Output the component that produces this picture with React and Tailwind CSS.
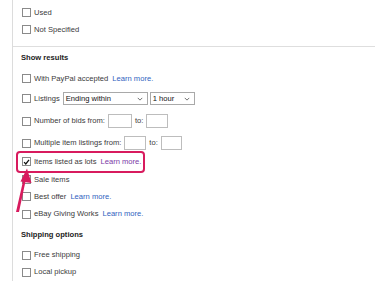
import React from 'react';

const font = { fontFamily: '"Liberation Sans", Arial, sans-serif' };

function Box({ checked }) {
  return (
    <span className="relative w-[9px] h-[9px] border border-[#8a8a8a] bg-white shrink-0 mr-[3px] flex items-center justify-center">
      {checked && (
        <svg viewBox="0 0 10 10" className="w-[8px] h-[8px]">
          <path d="M1.5 5.2 L4 7.8 L8.6 1.8" fill="none" stroke="#111" strokeWidth="1.8" />
        </svg>
      )}
    </span>
  );
}

function Learn({ visited }) {
  return (
    <span className={`ml-[4px] ${visited ? 'text-[#7a3aa6]' : 'text-[#2f62c0]'}`}>Learn more.</span>
  );
}

function Row({ h, children, checked }) {
  return (
    <div className={`flex items-center pl-[9px] ${h}`}>
      <Box checked={checked} />
      {children}
    </div>
  );
}

function Select({ w, label }) {
  return (
    <span className={`${w} h-[13px] border border-[#a9a9a9] bg-white flex items-center justify-between px-[2px] text-[#111]`}>
      <span>{label}</span>
      <svg viewBox="0 0 8 5" className="w-[6px] h-[4px] mr-[2px]">
        <path d="M1 1 L4 4 L7 1" fill="none" stroke="#444" strokeWidth="1" />
      </svg>
    </span>
  );
}

function Field({ w }) {
  return <span className={`${w} h-[14px] border border-[#bdbdbd] bg-white inline-block`} />;
}

export default function App() {
  return (
    <div className="w-[375px] h-[281px] bg-white overflow-hidden text-[7.6px] text-[#3a3a3a]" style={font}>
      <div className="relative ml-[12px] h-full border-l border-[#dcdcdc]">
        <div className="pt-[4px]">
          <Row h="h-[17px]">Used</Row>
          <Row h="h-[17px]">Not Specified</Row>
        </div>
        <div className="mt-[8px] border-t border-[#dedede]">
          <div className="h-[22px] flex items-center pl-[8px] font-bold text-[#222]">Show results</div>
          <Row h="h-[19px]">
            With PayPal accepted <Learn />
          </Row>
          <Row h="h-[21px]">
            Listings
            <span className="ml-[3px]">
              <Select w="w-[85px]" label="Ending within" />
            </span>
            <span className="ml-[2px]">
              <Select w="w-[45px]" label="1 hour" />
            </span>
          </Row>
          <Row h="h-[24px]">
            Number of bids from:
            <span className="ml-[3px] flex items-center">
              <Field w="w-[24px]" />
              <span className="mx-[3px]">to:</span>
              <Field w="w-[22px]" />
            </span>
          </Row>
          <Row h="h-[20px]">
            Multiple item listings from:
            <span className="ml-[3px] flex items-center">
              <Field w="w-[22px]" />
              <span className="mx-[3px]">to:</span>
              <Field w="w-[21px]" />
            </span>
          </Row>
          <div className="h-[18px] flex items-center pl-[9px]">
            <span className="relative flex items-center">
              <Box checked />
              Items listed as lots <Learn visited />
              <span className="absolute left-[-6px] right-[-4px] top-[-5px] bottom-[-5px] border-2 border-[#d81b5e] rounded-[4px]" />
            </span>
          </div>
          <Row h="h-[17px]">Sale items</Row>
          <Row h="h-[17px]">
            Best offer <Learn />
          </Row>
          <Row h="h-[18px]">
            eBay Giving Works <Learn />
          </Row>
          <div className="h-[24px] flex items-center pl-[8px] font-bold text-[#222]">Shipping options</div>
          <Row h="h-[16px]">Free shipping</Row>
          <Row h="h-[18px]">Local pickup</Row>
        </div>
        <svg className="absolute left-[-12px] top-0 w-[40px] h-[281px] pointer-events-none" viewBox="0 0 40 281">
          <path d="M15 212 L18 212 L25 179 L22.5 179 Z" fill="#d81b5e" />
          <path d="M26 168.5 L19.5 181.5 L30.5 183 Z" fill="#d81b5e" />
        </svg>
      </div>
    </div>
  );
}
